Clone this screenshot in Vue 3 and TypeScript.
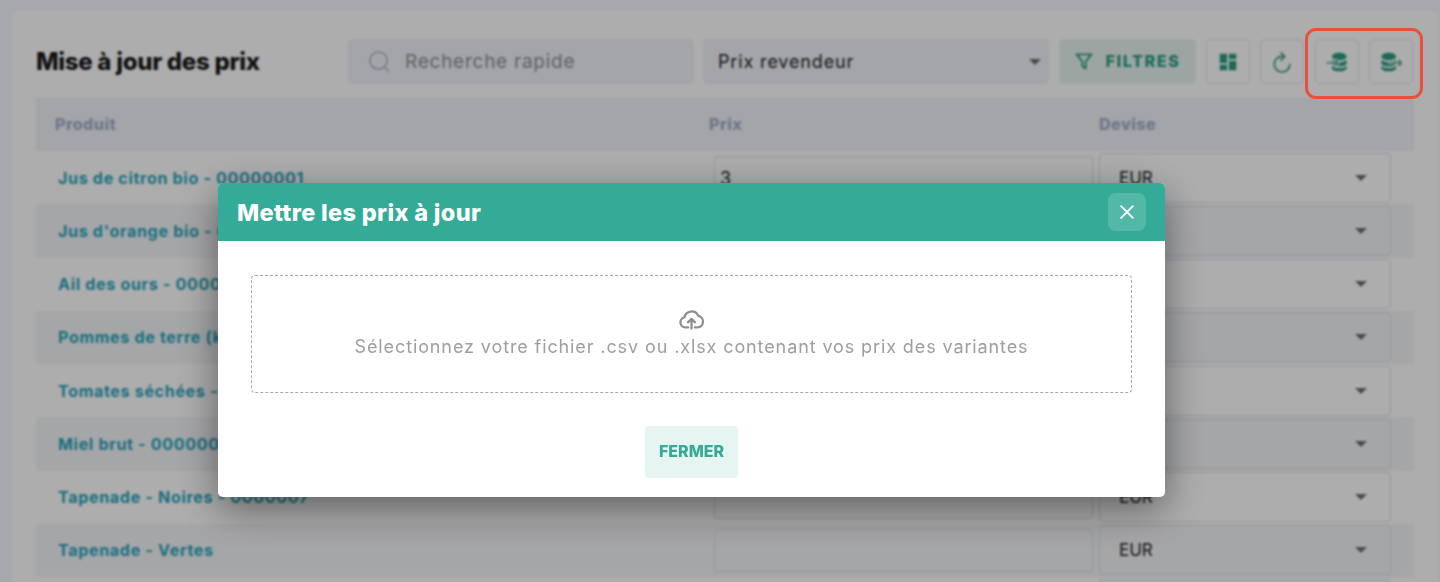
<script setup lang="ts">
interface PriceRow {
  name: string
  price: string
  currency: string
}

const rows: PriceRow[] = [
  { name: 'Jus de citron bio - 00000001', price: '3', currency: 'EUR' },
  { name: "Jus d'orange bio - 00000002", price: '', currency: 'EUR' },
  { name: 'Ail des ours - 00000003', price: '', currency: 'EUR' },
  { name: 'Pommes de terre (kg) - 00000004', price: '', currency: 'EUR' },
  { name: 'Tomates séchées - 00000005', price: '', currency: 'EUR' },
  { name: 'Miel brut - 00000006', price: '', currency: 'EUR' },
  { name: 'Tapenade - Noires - 0000007', price: '', currency: 'EUR' },
  { name: 'Tapenade - Vertes', price: '', currency: 'EUR' },
  { name: '', price: '', currency: '' },
]
</script>

<template>
  <div class="page">
    <section class="card">
      <header class="toolbar">
        <h1 class="title">Mise à jour des prix</h1>
        <div class="search">
          <svg class="search-icon" viewBox="0 0 24 24" fill="none" stroke="currentColor" stroke-width="1.6" stroke-linecap="round">
            <circle cx="11" cy="11" r="9" />
            <path d="M17.6 18l3.4 4" />
          </svg>
          <span>Recherche rapide</span>
        </div>
        <div class="price-select">
          <span>Prix revendeur</span>
          <i class="caret"></i>
        </div>
        <button class="filters">
          <svg viewBox="0 0 24 24" fill="none" stroke="currentColor" stroke-width="2.2" stroke-linejoin="round">
            <path d="M3 4h18l-7 8.500V21l-4-2.500v-6z" />
          </svg>
          FILTRES
        </button>
        <button class="tool tool-layout">
          <svg viewBox="0 0 24 24" fill="currentColor">
            <path d="M3 13h8V3H3v10zm0 8h8v-6H3v6zm10 0h8V11h-8v10zm0-18v6h8V3h-8z" />
          </svg>
        </button>
        <button class="tool tool-refresh">
          <svg viewBox="0 0 24 24" fill="none" stroke="currentColor" stroke-width="1.8" stroke-linecap="round" stroke-linejoin="round">
            <path d="M13 6A8.500 8.500 0 1 0 20.500 14.500" />
            <path d="M11 2l4 4-4 4" />
          </svg>
        </button>
        <button class="tool tool-import">
          <svg viewBox="0 0 24 24" fill="currentColor">
            <ellipse cx="14.500" cy="6" rx="8" ry="4.200" />
            <path d="M6.500 9.500c1.500 1.900 4.500 2.700 8 2.700s6.500-.8 8-2.700V13c0 2.300-3.500 3.700-8 3.700s-8-1.400-8-3.700z" />
            <path d="M6.500 16c1.500 1.900 4.500 2.700 8 2.700s6.500-.8 8-2.700v2.500c0 2.300-3.500 3.700-8 3.700s-8-1.400-8-3.700z" />
            <path d="M5 13h8M9.500 9l4 4-4 4" fill="none" stroke="#fff" stroke-width="3" />
            <path d="M0.500 13h12.500M9.800 9.800l3.200 3.200-3.200 3.200" fill="none" stroke="currentColor" stroke-width="1.500" />
          </svg>
        </button>
        <button class="tool tool-export">
          <svg viewBox="0 0 24 24" fill="currentColor">
            <ellipse cx="9.500" cy="6" rx="8" ry="4.200" />
            <path d="M1.500 9.500c1.500 1.900 4.500 2.700 8 2.700s6.500-.8 8-2.700V13c0 2.300-3.500 3.700-8 3.700s-8-1.400-8-3.700z" />
            <path d="M1.500 16c1.500 1.900 4.500 2.700 8 2.700s6.500-.8 8-2.700v2.500c0 2.300-3.500 3.700-8 3.700s-8-1.400-8-3.700z" />
            <path d="M9 13h15M19.500 9l4 4-4 4" fill="none" stroke="#fff" stroke-width="3" />
            <path d="M10 13h13.500M20.300 9.800l3.200 3.200-3.200 3.200" fill="none" stroke="currentColor" stroke-width="1.500" />
          </svg>
        </button>
      </header>

      <div class="table">
        <div class="thead">
          <span class="th th-product">Produit</span>
          <span class="th">Prix</span>
          <span class="th">Devise</span>
        </div>
        <div v-for="(row, i) in rows" :key="i" class="tr" :class="{ 'tr--alt': i % 2 === 1 }">
          <span class="product">{{ row.name }}</span>
          <div class="price-input">{{ row.price }}</div>
          <div class="currency">
            <span>{{ row.currency }}</span>
            <i v-if="row.currency" class="caret"></i>
          </div>
        </div>
      </div>
    </section>

    <div class="overlay">
      <div class="modal">
        <header class="modal-head">
          <h2>Mettre les prix à jour</h2>
          <button class="close">
            <svg viewBox="0 0 24 24" fill="none" stroke="currentColor" stroke-width="2.200" stroke-linecap="round">
              <path d="M5 5l14 14M19 5L5 19" />
            </svg>
          </button>
        </header>
        <div class="modal-body">
          <div class="dropzone">
            <svg class="cloud" viewBox="0 0 24 24" fill="none" stroke="currentColor" stroke-width="2" stroke-linecap="round" stroke-linejoin="round">
              <path d="M9 19H6.500a4.500 4.500 0 0 1-.8-8.900 6.500 6.500 0 0 1 12.300-1.400A5.200 5.200 0 0 1 17.500 19H15" />
              <path d="M12 20v-8M8.800 14.500L12 11.500l3.200 3" />
            </svg>
            <span>Sélectionnez votre fichier .csv ou .xlsx contenant vos prix des variantes</span>
          </div>
          <button class="dismiss">FERMER</button>
        </div>
      </div>
    </div>

    <div class="highlight"></div>
  </div>
</template>

<style scoped>
.page {
  position: relative;
  height: 582px;
  overflow: hidden;
  padding: 10px 0 0 12px;
  box-sizing: border-box;
  font-family: Inter, "Open Sans", sans-serif;
}
.card {
  width: 1426px;
  height: 600px;
  background: #fff;
  border-radius: 6px;
  padding: 29px 0 0 24px;
  box-sizing: border-box;
}
.toolbar {
  display: flex;
  align-items: center;
  height: 45px;
  margin-bottom: 14px;
}
.title {
  width: 312px;
  margin: 0;
  font-size: 24px;
  font-weight: 800;
  color: #1a1a1a;
  letter-spacing: -0.3px;
}
.search {
  display: flex;
  align-items: center;
  gap: 14px;
  width: 346px;
  height: 45px;
  padding-left: 20px;
  box-sizing: border-box;
  margin-right: 9px;
  border-radius: 5px;
  background: #f0f3fa;
  color: #8f8f93;
  font-size: 19px;
  letter-spacing: 0.75px;
}
.search-icon {
  width: 23px;
  height: 23px;
  color: #a3b1cc;
}
.price-select {
  display: flex;
  align-items: center;
  justify-content: space-between;
  width: 346px;
  height: 45px;
  padding: 0 8px 0 15px;
  box-sizing: border-box;
  margin-right: 10px;
  border-radius: 5px;
  background: #f0f3fa;
  color: #1e1e1e;
  font-size: 18px;
  letter-spacing: 0.85px;
}
.caret {
  width: 0;
  height: 0;
  border-left: 6px solid transparent;
  border-right: 6px solid transparent;
  border-top: 6px solid #6e6e6e;
}
button {
  font-family: inherit;
  cursor: pointer;
}
.filters {
  display: flex;
  align-items: center;
  justify-content: center;
  gap: 11px;
  width: 137px;
  height: 45px;
  margin-right: 10px;
  padding: 0 0 2px;
  border: 0;
  border-radius: 5px;
  background: #e8f4f1;
  color: #2a9c84;
  font-size: 16px;
  font-weight: 800;
  letter-spacing: 1.7px;
}
.filters svg {
  width: 20px;
  height: 20px;
}
.tool {
  display: flex;
  align-items: center;
  justify-content: center;
  width: 44px;
  height: 45px;
  padding: 0;
  border: 1px solid #dfe5f0;
  border-radius: 5px;
  background: #fff;
  color: #2a9c84;
  margin-right: 10px;
}
.tool-refresh {
  margin-right: 11px;
}
.tool svg {
  width: 22px;
  height: 22px;
}
.table {
  width: 1378px;
}
.thead,
.tr {
  display: grid;
  grid-template-columns: 673px 390px 315px;
  align-items: center;
}
.thead {
  height: 53px;
  padding-bottom: 2px;
  box-sizing: border-box;
  background: #f0f3fa;
}
.th {
  color: #a3b1cc;
  font-size: 16px;
  font-weight: 800;
  letter-spacing: 0.5px;
}
.th-product {
  padding-left: 19px;
}
.tr {
  height: 53.25px;
}
.tr--alt {
  background: #f4f5f8;
}
.product {
  padding-left: 22px;
  white-space: nowrap;
  color: #27a5bd;
  font-size: 16px;
  font-weight: 700;
  letter-spacing: 0.7px;
}
.price-input {
  width: 379px;
  height: 43px;
  margin-left: 5px;
  padding: 11px 5px 0;
  box-sizing: border-box;
  border: 1px solid #d8dfec;
  border-radius: 4px;
  color: #1e1e1e;
  font-size: 18px;
}
.currency {
  display: flex;
  align-items: center;
  justify-content: space-between;
  width: 292px;
  height: 50px;
  padding: 0 23px 0 19px;
  box-sizing: border-box;
  border: 1px solid #d8dfec;
  border-radius: 4px;
  color: #1e1e1e;
  font-size: 17px;
}
.overlay {
  position: absolute;
  inset: 0;
  background: rgba(0, 0, 0, 0.32);
  backdrop-filter: blur(1px);
}
.modal {
  position: absolute;
  left: 218px;
  top: 183px;
  width: 947px;
  height: 314px;
  border-radius: 5px;
  background: #fff;
  box-shadow: 0 12px 40px rgba(0, 0, 0, 0.45);
}
.modal-head {
  display: flex;
  align-items: center;
  justify-content: space-between;
  height: 58px;
  padding: 0 19px;
  border-radius: 5px 5px 0 0;
  background: #34ab96;
  color: #fff;
}
.modal-head h2 {
  margin: 0;
  font-size: 23.5px;
  font-weight: 800;
  letter-spacing: 0.33px;
}
.close {
  display: flex;
  align-items: center;
  justify-content: center;
  width: 38px;
  height: 38px;
  padding: 0;
  border: 0;
  border-radius: 8px;
  background: rgba(255, 255, 255, 0.16);
  color: #fff;
}
.close svg {
  width: 20px;
  height: 20px;
}
.modal-body {
  display: flex;
  flex-direction: column;
  align-items: center;
  padding: 34px 33px 0;
}
.dropzone {
  display: flex;
  flex-direction: column;
  align-items: center;
  justify-content: center;
  gap: 3px;
  width: 100%;
  height: 118px;
  padding-bottom: 5px;
  box-sizing: border-box;
  border: 1px dashed #a8a8a8;
  border-radius: 4px;
  color: #9e9e9e;
  font-size: 18px;
  letter-spacing: 0.89px;
}
.cloud {
  width: 27px;
  height: 27px;
  color: #8e8e8e;
}
.dismiss {
  width: 93px;
  height: 52px;
  margin-top: 33px;
  padding: 0 0 2px;
  border: 0;
  border-radius: 4px;
  background: #e7f5f2;
  color: #34ab96;
  font-size: 16px;
  font-weight: 800;
}
.highlight {
  position: absolute;
  left: 1305px;
  top: 28px;
  width: 118px;
  height: 71px;
  box-sizing: border-box;
  border: 3.5px solid #e8503a;
  border-radius: 11px;
}
</style>

<style>
html,
body {
  margin: 0;
  background: #f5f8ff;
}
</style>
